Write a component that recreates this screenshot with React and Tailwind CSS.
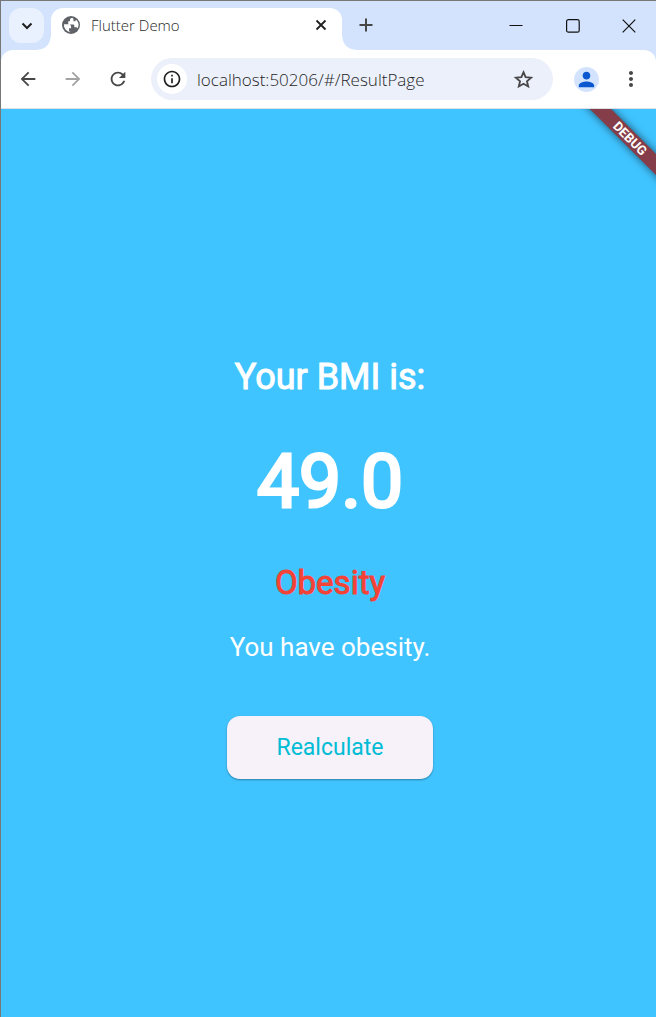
import React from "react";
import {
  MdArrowBack,
  MdArrowForward,
  MdRefresh,
  MdInfoOutline,
  MdPerson,
  MdMoreVert,
} from "react-icons/md";

function GlobeIcon() {
  return (
    <svg viewBox="0 0 20 20" className="size-5" aria-hidden="true">
      <circle cx="10" cy="10" r="9" fill="#5f6368" />
      <path
        d="M10.500 3.100c-1 .3-1.500 1-1.500 2v1.200H7.200v2c0 .8.600 1.300 1.400 1.300h3.200c1 0 1.500.5 1.500 1.300v1.300h1.500c.9 0 1.500.5 1.800 1.200a7.200 7.200 0 0 0-1.500-8.600l-1 1.400h-1.600V4.500c0-.7-.3-1.200-1-1.400zM2.900 9.300h4.400c1.700 0 2.800 1.100 2.800 2.700v1.300H8v2.300c0 .8.800 1.100 2 1.600A7.200 7.200 0 0 1 2.900 9.300z"
        fill="#fff"
      />
    </svg>
  );
}

function StarIcon() {
  return (
    <svg
      viewBox="0 0 24 24"
      className="size-[23px]"
      fill="none"
      stroke="currentColor"
      strokeWidth="1.900"
      aria-hidden="true"
    >
      <path d="m12 4.400 2.200 5.200 5.700.5-4.300 3.700 1.300 5.500L12 16.400l-4.900 2.900 1.300-5.500-4.300-3.700 5.700-.5z" />
    </svg>
  );
}

function TabStrip() {
  return (
    <header className="flex h-[49px] items-start bg-[#d3e3fd] pl-2 text-[#1f1f1f]">
      <button
        aria-label="Search tabs"
        className="mt-[7px] flex size-[35px] shrink-0 items-center justify-center rounded-xl bg-[#e9f1fe]"
      >
        <svg viewBox="0 0 12 12" className="size-3" fill="none" stroke="currentColor" strokeWidth="2">
          <path d="M1.500 3.500 6 8l4.500-4.500" />
        </svg>
      </button>
      <div className="-ml-[6px] flex h-full min-w-0 items-end">
        <div className="size-[13px] shrink-0 bg-[radial-gradient(circle_at_0_0,transparent_12px,white_13px)]" />
        <div className="flex h-[42px] w-[291px] min-w-0 items-start rounded-t-xl bg-white pt-[7px] pr-[11px] pl-[10px]">
          <GlobeIcon />
          <span className="ml-[10px] grow truncate font-['Open_Sans',sans-serif] text-[15px] leading-5 font-light">
            Flutter Demo
          </span>
          <button aria-label="Close tab" className="flex size-5 shrink-0 items-center justify-center">
            <svg viewBox="0 0 12 12" className="size-3" fill="none" stroke="currentColor" strokeWidth="1.800">
              <path d="m1.500 1.500 9 9m0-9-9 9" />
            </svg>
          </button>
        </div>
        <div className="size-[13px] shrink-0 bg-[radial-gradient(circle_at_100%_0,transparent_12px,white_13px)]" />
      </div>
      <button aria-label="New tab" className="mt-[14px] ml-px flex size-5 shrink-0 items-center justify-center text-[#474747]">
        <svg viewBox="0 0 14 14" className="size-[14px]" fill="none" stroke="currentColor" strokeWidth="2">
          <path d="M7 .5v13M.5 7h13" />
        </svg>
      </button>
      <div className="ml-auto flex h-full shrink-0 items-center text-[#111]">
        <button aria-label="Minimize" className="flex h-full w-[57px] items-center justify-center">
          <svg viewBox="0 0 14 14" className="size-[14px]" stroke="currentColor">
            <path d="M.5 6.500h13" />
          </svg>
        </button>
        <button aria-label="Maximize" className="flex h-full w-[57px] items-center justify-center">
          <svg viewBox="0 0 14 14" className="size-[14px]" fill="none" stroke="currentColor" strokeWidth="1.200">
            <rect x=".6" y=".6" width="12.600" height="12.600" rx="1.800" />
          </svg>
        </button>
        <button aria-label="Close" className="flex h-full w-[55px] items-center justify-center">
          <svg viewBox="0 0 14 14" className="size-[14px]" fill="none" stroke="currentColor" strokeWidth="1.200">
            <path d="m.7.700 12.600 12.600m0-12.600L.7 13.300" />
          </svg>
        </button>
      </div>
    </header>
  );
}

function Toolbar() {
  return (
    <div className="bg-[#d3e3fd]">
      <nav className="flex h-[59px] items-center rounded-t-xl border-b border-[#dcdfe3] bg-white pr-[13px] pl-4 text-[#474747]">
        <button aria-label="Back" className="shrink-0">
          <MdArrowBack className="size-[22px]" />
        </button>
        <button aria-label="Forward" className="ml-[23px] shrink-0 text-[#a3a3a3]">
          <MdArrowForward className="size-[22px]" />
        </button>
        <button aria-label="Reload" className="ml-[23px] shrink-0">
          <MdRefresh className="size-[22px]" />
        </button>
        <div className="ml-[22px] flex h-[42px] min-w-0 grow items-center rounded-full bg-[#ebf0fa] pr-[18px] pl-[6px]">
          <button
            aria-label="Site information"
            className="flex size-[30px] shrink-0 items-center justify-center rounded-full bg-white text-[#1f1f1f]"
          >
            <MdInfoOutline className="size-5" />
          </button>
          <input
            aria-label="Address"
            defaultValue="localhost:50206/#/ResultPage"
            className="ml-[10px] h-7 w-0 grow bg-transparent font-['Open_Sans',sans-serif] text-[17px] leading-6 font-light text-[#1f1f1f] outline-none"
          />
          <button aria-label="Bookmark this tab" className="shrink-0">
            <StarIcon />
          </button>
        </div>
        <button
          aria-label="Profile"
          className="ml-[21px] flex size-[25px] shrink-0 items-center justify-center rounded-full bg-[#d3e3fd] text-[#0b57d0]"
        >
          <MdPerson className="size-[23px]" />
        </button>
        <button aria-label="Menu" className="ml-[20px] shrink-0">
          <MdMoreVert className="size-6" />
        </button>
      </nav>
    </div>
  );
}

export default function App() {
  return (
    <div className="flex min-h-screen flex-col border-t border-l border-[#777] bg-white">
      <TabStrip />
      <Toolbar />
      <main className="relative flex grow flex-col items-center justify-center overflow-hidden bg-[#40c4ff] pl-[3px] font-[Roboto,sans-serif] text-white">
        <div className="absolute top-[22px] -right-[44px] flex h-[15px] w-[140px] rotate-45 items-center justify-center bg-[#853d49] text-[13px] leading-[15px] font-bold shadow-[0_0_8px_rgba(0,0,0,0.6)]">
          DEBUG
        </div>
        <h1 className="text-[36px] leading-[60px] [-webkit-text-stroke:1px]">Your BMI is:</h1>
        <p className="mt-7 text-[75px] leading-[92px] [-webkit-text-stroke:3px]">49.0</p>
        <p className="mt-9 text-[33px] leading-10 text-[#f44336] [-webkit-text-stroke:1px]">Obesity</p>
        <p className="mt-7 text-[26px] leading-8">You have obesity.</p>
        <button className="mt-[53px] h-[63px] rounded-[13px] bg-[#f7f2fa] px-[49px] text-[23px] leading-7 text-[#00bcd4] shadow-[0_1px_2px_rgba(0,0,0,0.35)]">
          Realculate
        </button>
      </main>
    </div>
  );
}
